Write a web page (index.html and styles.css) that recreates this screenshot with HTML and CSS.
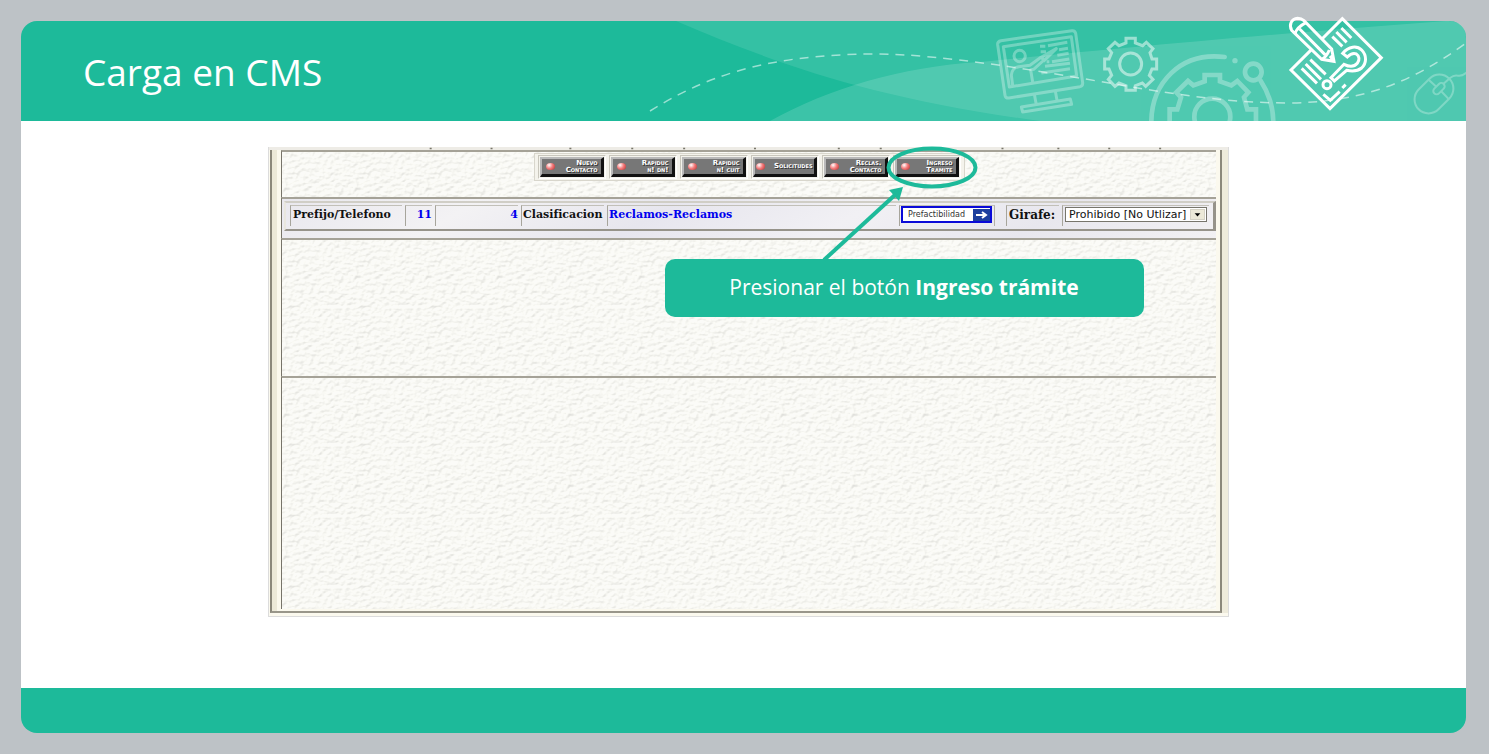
FILE: index.html
```html
<!DOCTYPE html>
<html lang="es">
<head>
<meta charset="utf-8">
<title>Carga en CMS</title>
<link rel="stylesheet" href="styles.css">
</head>
<body>
<div class="slide">
  <header class="slide-header">
    <h1 class="slide-title">Carga en CMS</h1>
    <svg class="header-art" viewBox="640 11 826 110" aria-hidden="true">
      <defs><clipPath id="band"><path d="M640 21H1448Q1466 21 1466 39V121H640Z"/></clipPath></defs>
      <g clip-path="url(#band)" fill="none" stroke="#fff">
        <path class="swoosh" d="M676 21C777 64 870 98 1040 121H1466V21Z"/>
        <path class="swoosh swoosh-front" d="M770 121C830 88 900 67 980 62C1060 54 1240 36 1446 21H1466V121Z"/>
        <path d="M650 111C700 80 760 54 876 54C940 54 1040 71 1120 85C1180 95 1230 103 1290 103C1360 102 1410 84 1466 43" stroke-width="1.5" stroke-dasharray="9 7" opacity=".55"/>
        <g transform="translate(980 10) scale(.3333)">
          <g opacity=".3" stroke-width="9" stroke-linejoin="round">
            <path d="M63 92L276 62Q285 61 287 70L308 218Q309 228 300 230L87 264Q77 265 75 256L53 104Q52 94 63 92Z"/>
            <path d="M70 110L274 80L290 198L88 231Z"/>
            <circle cx="119" cy="138" r="17"/>
            <path d="M98 226L94 195Q97 173 116 170L150 166L183 142L192 150L161 178L152 180L158 216M183 142L229 116L190 154M229 116L187 140"/>
            <path d="M180 109H196M204 107L262 97M182 125H198M237 119L264 115M232 136L266 130M200 155H208M216 155L268 147M195 169L270 160M184 189L270 176"/>
            <path d="M163 252L168 280M226 243L231 271M124 291L271 267L275 283L128 306Z"/>
          </g>
          <g opacity=".5" stroke-width="9">
            <circle cx="452" cy="162" r="33"/>
            <path d="M438 85H466V99L488 107L499 97L519 116L510 128L516 147H530V177H516L508 196L519 208L497 229L487 219L466 227V241H438V227L417 219L405 229L385 208L395 196L387 177H374V147H387L395 128L385 116L405 97L417 107L438 99Z"/>
          </g>
          <g opacity=".3" stroke-width="14" stroke-linecap="round">
            <circle cx="697" cy="320" r="54"/>
            <path stroke-linecap="butt" d="M569 336V298H592L603 262L589 247L624 213L640 226L674 214V195H720V214L754 226L772 213L805 247L792 262L802 298H828V336"/>
            <path d="M514 338C514 220 600 125 734 141"/>
            <circle cx="765" cy="152" r="8" fill="#fff" stroke="none"/>
            <circle cx="820" cy="186" r="25"/>
            <path d="M842 212Q880 270 880 338"/>
          </g>
        </g>
        <g transform="translate(1220 0) scale(.3333)" opacity=".27" stroke-width="6">
          <rect x="-42" y="-65" width="84" height="130" rx="42" transform="translate(642 282) rotate(45)"/>
          <rect x="-10" y="-20" width="20" height="40" rx="10" transform="translate(657 266) rotate(45)"/>
          <path d="M626 239L649 260M663 273L687 298M669 253L690 234Q703 224 713 227Q726 230 742 216"/>
        </g>
      </g>
      <g transform="translate(1220 0) scale(.3333)" fill="none" stroke="#fff" stroke-width="9">
        <path d="M275 148L213 210L330 326L484 173L367 56L306 117"/>
        <path d="M215 91C206 75 214 56 233 55Q244 55 252 62L335 147L342 184L305 178ZM226 102Q227 84 258 68M239 87L315 164M305 178Q320 170 328 150M330 168L342 184"/>
        <path d="M337 110L367 139M349 96L380 127M364 84L394 114M245 205L291 250M257 192L303 238M271 179L317 223"/>
        <path d="M368 160C386 138 411 136 425 150C441 166 440 190 425 204C410 216 395 214 380 211L343 243L333 233L372 193C386 200 402 202 412 190C420 180 418 168 409 162C400 158 392 161 382 171Z"/>
        <circle cx="321" cy="254" r="12"/>
        <path d="M310 283L331 301L359 275M367 264L377 254"/>
      </g>
    </svg>
  </header>

  <main class="slide-body">
    <section class="capture">
      <svg class="ticks" viewBox="0 0 961 2" preserveAspectRatio="none" aria-hidden="true"><path d="M161 1h2M222 1h2M301 1h2M363 1h2M415 1h2M486 1h2M570 1h2M612 1h2M734 1h2M790 1h2M841 1h2M892 1h2"/></svg>
      <div class="window">
        <nav class="pane toolbar">
          <div class="tool-row">
            <span class="tool-cell"><button class="tool" type="button"><i class="led"></i><span class="tool-text"><span>Nuevo</span><span>Contacto</span></span></button></span>
            <span class="tool-cell"><button class="tool" type="button"><i class="led"></i><span class="tool-text"><span>Rapiduc</span><span>n! dn!</span></span></button></span>
            <span class="tool-cell"><button class="tool" type="button"><i class="led"></i><span class="tool-text"><span>Rapiduc</span><span>n! cuit</span></span></button></span>
            <span class="tool-cell"><button class="tool tool-single" type="button"><i class="led"></i><span class="tool-text"><span>Solicitudes</span></span></button></span>
            <span class="tool-cell"><button class="tool" type="button"><i class="led"></i><span class="tool-text"><span>Reclas.</span><span>Contacto</span></span></button></span>
            <span class="tool-cell"><button class="tool" type="button"><i class="led"></i><span class="tool-text"><span>Ingreso</span><span>Tramite</span></span></button></span>
          </div>
        </nav>
        <div class="pane record">
          <form class="record-row">
            <span class="cell cell-label">Prefijo/Telefono</span>
            <span class="cell cell-prefix">11</span>
            <span class="cell cell-phone">4</span>
            <span class="cell cell-class">Clasificacion</span>
            <span class="cell cell-value">Reclamos-Reclamos</span>
            <span class="cell cell-action">
              <button class="prefact" type="button"><span class="prefact-text">Prefactibilidad</span>
                <svg class="prefact-arrow" viewBox="0 0 17 12" aria-hidden="true"><path d="M3 6H13M9 3L13 6L9 9" fill="none" stroke="#fff" stroke-width="2"/></svg>
              </button>
            </span>
            <label class="cell cell-girafe" for="girafe">Girafe:</label>
            <span class="cell cell-select">
              <span class="select-wrap">
                <select class="girafe" id="girafe"><option>Prohibido [No Utlizar]</option></select>
                <svg class="select-arrow" viewBox="0 0 15 11" aria-hidden="true"><path d="M4 4H11L7.500 8Z"/></svg>
              </span>
            </span>
          </form>
        </div>
        <div class="pane pane-middle"></div>
        <div class="pane pane-bottom"></div>
      </div>
      <div class="annotation">
        <svg class="pointer" viewBox="665 147 479 112" aria-hidden="true">
          <ellipse cx="932" cy="167.500" rx="43.500" ry="19" fill="none" stroke="#1dba9a" stroke-width="4"/>
          <path d="M824 260L896 194" stroke="#1dba9a" stroke-width="4"/>
          <path d="M903 187L899 201L889 190Z" fill="#1dba9a"/>
        </svg>
        <p class="callout">Presionar el botón <strong>Ingreso trámite</strong></p>
      </div>
    </section>
  </main>
  <footer class="slide-footer"></footer>
</div>
</body>
</html>
```

FILE: styles.css
```css
* { box-sizing: border-box; }

body {
  margin: 0;
  background: #bdc2c6;
  font-family: "Open Sans", "Noto Sans", sans-serif;
}

.slide {
  display: flex;
  flex-direction: column;
  min-height: 100vh;
  padding: 21px 23px 21px 21px;
}

.slide-header {
  position: relative;
  display: flex;
  align-items: center;
  height: 100px;
  padding: 2px 62px 0;
  border-radius: 16px 16px 0 0;
  background: #1dba9a;
}

.slide-title {
  margin: 0;
  color: #fff;
  font-size: 37px;
  font-weight: 400;
  line-height: 48px;
}

.header-art {
  position: absolute;
  top: -10px;
  right: 0;
  width: 826px;
  height: 110px;
  overflow: visible;
}

.swoosh { fill: #fff; fill-opacity: .1; stroke: none; }
.swoosh-front { fill-opacity: .14; }

.slide-body {
  display: flex;
  flex: 1;
  padding: 26px 237px 71px 247px;
  background: #fff;
}

.slide-footer {
  height: 45px;
  border-radius: 0 0 16px 16px;
  background: #1dba9a;
}

.capture {
  position: relative;
  display: flex;
  flex: 1;
  flex-direction: column;
  border: 1px solid #dcdcdc;
  border-top: 0;
  background: #fbf9ee;
}

.ticks {
  display: block;
  width: 100%;
  height: 3px;
  background: #eeece6;
  stroke: #77756a;
}

.window {
  display: flex;
  flex: 1;
  flex-direction: column;
  margin: 0 6px 3px 1px;
  padding: 0 4px 2px 9px;
  border-right: 2px solid #8b887b;
  border-bottom: 2px solid #99968a;
  border-left: 2px solid #8b887b;
  background: linear-gradient(90deg, #ece9d8 5px, #fbf9ee 5px);
  box-shadow: 6px 0 0 #eeebdb;
}

.pane {
  border-top: 2px solid #a5a297;
  border-left: 1px solid #77746a;
  background-color: #f8f8f3;
  background-image: url("data:image/svg+xml,%3Csvg xmlns='http://www.w3.org/2000/svg' width='71' height='71'%3E%3Cfilter id='p' x='0' y='0' width='100%25' height='100%25' color-interpolation-filters='sRGB'%3E%3CfeTurbulence type='fractalNoise' baseFrequency='.2 .27' numOctaves='2' seed='8' stitchTiles='stitch'/%3E%3CfeDiffuseLighting surfaceScale='1' diffuseConstant='1.1' lighting-color='%23fffffa'%3E%3CfeDistantLight azimuth='235' elevation='64'/%3E%3C/feDiffuseLighting%3E%3C/filter%3E%3Crect width='71' height='71' filter='url(%23p)' opacity='.38'/%3E%3C/svg%3E");
}

.toolbar {
  display: flex;
  justify-content: center;
  height: 47px;
  padding: 1px 0 0;
}

.tool-row {
  display: flex;
  gap: 3px;
  height: 28px;
  padding: 1px 3px;
  border: 1px solid #d8d6cc;
  background: #f4f3ec;
}

.tool-cell {
  width: 68px;
  padding: 1px;
  border: 1px solid #c9c7bd;
  border-right-color: #fff;
  border-bottom-color: #fff;
}

.tool {
  display: flex;
  align-items: center;
  justify-content: space-between;
  width: 100%;
  height: 100%;
  padding: 0 3px 0 4px;
  border: solid;
  border-width: 2px 3px 3px 2px;
  border-color: #b9b9b9 #111 #111 #b9b9b9;
  background: #777;
  color: #fff;
  font: bold small-caps 7px/7px "DejaVu Sans", sans-serif;
  text-align: right;
  text-shadow: 1px 1px 0 #333;
}

.tool-text { display: grid; }

.tool-single { padding: 0 1px; }

.led {
  flex: none;
  width: 9px;
  height: 7px;
  border-radius: 50%;
  background: radial-gradient(circle at 35% 30%, #fff, #f47d7d 45%, #b52a2a);
}

.record {
  height: 41px;
  padding: 2px 0 6px 2px;
  background-color: #ecebf0;
  background-image: linear-gradient(150deg, #e9e8ee, #f3f2f4 20%, #e7e6ee 40%, #f1f0f4 60%, #e8e7ee 80%, #f2f1f3);
}

.record-row {
  display: flex;
  gap: 3px;
  height: 30px;
  padding: 2px 4px 3px 4px;
  border: solid;
  border-width: 2px 3px 2px 2px;
  border-color: #d0cec6 #96938a #96938a #e9e7df;
  font: bold 11px/18px "DejaVu Serif", serif;
  color: #111;
}

.cell {
  flex: none;
  padding-left: 2px;
  border-top: 1px solid #c2c0b8;
  border-left: 1px solid #a7a59c;
  white-space: nowrap;
}

.cell-label { width: 112px; }
.cell-prefix { width: 27px; color: #00e; text-align: right; }
.cell-phone { width: 83px; color: #00e; text-align: right; }
.cell-class { width: 83px; padding-left: 1px; }
.cell-value { flex: 1; padding-left: 1px; color: #00e; }
.cell-action { width: 96px; margin-right: 8px; padding: 0 0 1px 1px; border-right: 1px solid #b3b1a8; }
.cell-girafe { width: 53px; font-size: 12px; }
.cell-select { width: 147px; padding: 1px 2px; }

.prefact {
  display: flex;
  align-items: center;
  justify-content: space-between;
  width: 91px;
  height: 17px;
  padding: 0 0 0 5px;
  border: 2px solid #0a0ad8;
  background: #fff;
  color: #333;
  font: 8px/12px "DejaVu Sans", sans-serif;
}

.prefact-arrow { width: 17px; height: 12px; background: #1d3f9e; }

.select-wrap { position: relative; display: block; }

.girafe {
  display: block;
  width: 142px;
  height: 15px;
  padding: 0 16px 0 3px;
  border: 1px solid #77756c;
  border-radius: 0;
  appearance: none;
  background: #fff;
  color: #111;
  font: 11px/13px "DejaVu Sans", sans-serif;
}

.select-arrow {
  position: absolute;
  top: 2px;
  right: 2px;
  width: 15px;
  height: 11px;
  border: 1px solid #d5d2c5;
  background: #ece9d8;
  pointer-events: none;
}

.pane-middle { height: 138px; }
.pane-bottom { flex: 1; min-height: 120px; }

.annotation {
  position: absolute;
  top: 0;
  left: calc(50% - 84px);
  width: 479px;
}

.pointer { display: block; width: 479px; height: 112px; overflow: visible; }

.callout {
  margin: 0;
  padding: 12px 20px 14px;
  border-radius: 10px;
  background: #1dba9a;
  color: #fff;
  font-size: 21px;
  line-height: 32px;
  text-align: center;
}
```
